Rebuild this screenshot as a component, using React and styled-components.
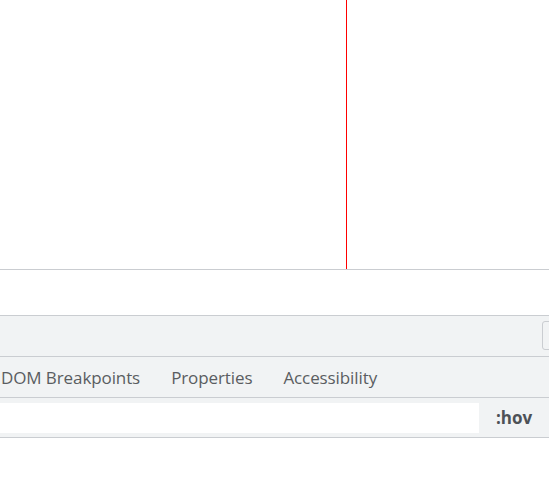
import React from 'react'
import styled, { createGlobalStyle } from 'styled-components'

const Global = createGlobalStyle`
  html, body {
    margin: 0;
    padding: 0;
    background: #fff;
    overflow: hidden;
  }
`

const Page = styled.div`
  display: flex;
  flex-direction: column;
  width: 549px;
  height: 481px;
  overflow: hidden;
  font-family: "Open Sans", "Noto Sans", sans-serif;
`

const Viewport = styled.div`
  display: flex;
  height: 269px;
  border-bottom: 1px solid #cacdd1;
  flex-shrink: 0;
`

const Guide = styled.div`
  margin-left: 346px;
  width: 1px;
  height: 100%;
  background: #ff0000;
`

const Blank = styled.div`
  height: 45px;
  border-bottom: 1px solid #cacdd1;
  flex-shrink: 0;
`

const Toolbar = styled.div`
  display: flex;
  height: 41px;
  padding: 5px 0 0 542px;
  box-sizing: border-box;
  background: #f1f3f4;
  border-bottom: 1px solid #cacdd1;
  flex-shrink: 0;
  overflow: hidden;
`

const ToolButton = styled.div`
  flex-shrink: 0;
  width: 24px;
  height: 29px;
  box-sizing: border-box;
  border: 1px solid #cacdd1;
  border-radius: 3px;
  background: #f1f3f4;
`

const Tabs = styled.div`
  display: flex;
  align-items: center;
  gap: 31px;
  height: 40px;
  padding-left: 1px;
  background: #f1f3f4;
  border-bottom: 1px solid #cacdd1;
  flex-shrink: 0;
`

const Tab = styled.div`
  font-size: 17px;
  color: #5a5d61;
  white-space: nowrap;
  letter-spacing: -0.1px;
`

const FilterBar = styled.div`
  display: flex;
  align-items: center;
  height: 39px;
  background: #f1f3f4;
  border-bottom: 1px solid #cacdd1;
  flex-shrink: 0;
`

const FilterInput = styled.div`
  width: 479px;
  height: 30px;
  background: #fff;
`

const Hov = styled.div`
  flex: 1;
  text-align: center;
  font-size: 17px;
  font-weight: 700;
  color: #4d5156;
`

export default function App() {
  return (
    <Page>
      <Global />
      <Viewport>
        <Guide />
      </Viewport>
      <Blank />
      <Toolbar>
        <ToolButton />
      </Toolbar>
      <Tabs>
        <Tab>DOM Breakpoints</Tab>
        <Tab>Properties</Tab>
        <Tab>Accessibility</Tab>
      </Tabs>
      <FilterBar>
        <FilterInput />
        <Hov>:hov</Hov>
      </FilterBar>
    </Page>
  )
}
